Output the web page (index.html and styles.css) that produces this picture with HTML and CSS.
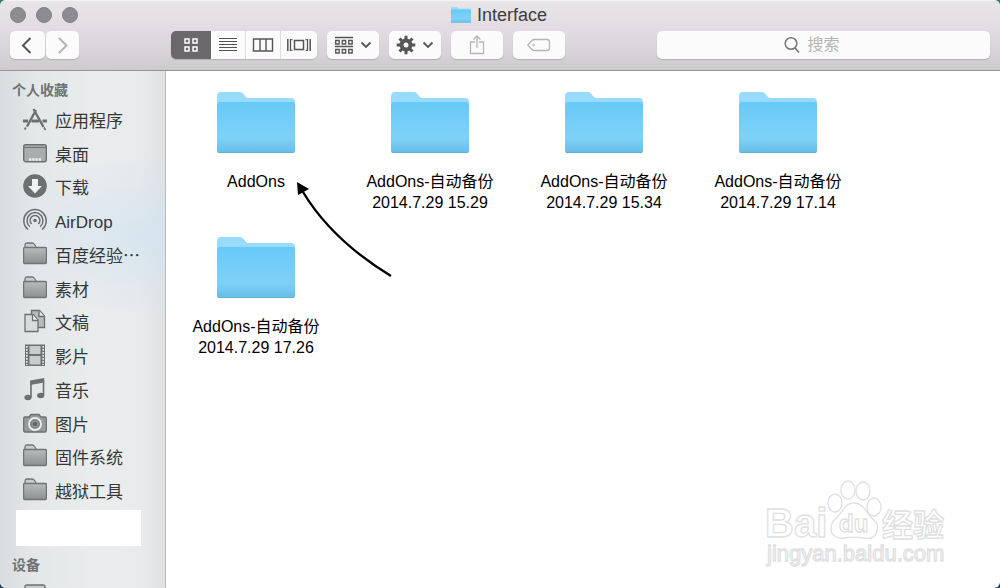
FILE: index.html
```
<!DOCTYPE html>
<html lang="zh-CN">
<head>
    <meta charset="UTF-8">
    <meta name="viewport" content="width=device-width, initial-scale=1.0">
    <title>Interface</title>
    <link rel="stylesheet" href="styles.css">
</head>
<body>
    <!-- shared shapes -->
    <svg class="defs" width="0" height="0" aria-hidden="true">
        <defs>
            <linearGradient id="blue" x1="0" y1="0" x2="0" y2="1">
                <stop offset="0" stop-color="#68c9f6"/>
                <stop offset="0.7" stop-color="#7ed2f8"/>
                <stop offset="1" stop-color="#66bde7"/>
            </linearGradient>
            <linearGradient id="gray" x1="0" y1="0" x2="0" y2="1">
                <stop offset="0" stop-color="#b9bcbd"/>
                <stop offset="1" stop-color="#8d9091"/>
            </linearGradient>
            <symbol id="folder" viewBox="0 0 78 62">
                <path d="M0 12V4q0-4 4-4h19q2 0 3.500 2l3 3.500q1 .5 2 .5H74q4 0 4 4v6H0z" fill="#97dcfe"/>
                <path d="M0 13q0-3 3-3h72q3 0 3 3v46q0 2-2 2H2q-2 0-2-2z" fill="url(#blue)"/>
                <path d="M1 60.500h76" fill="none" stroke="#62b0d6"/>
            </symbol>
            <symbol id="side-folder" viewBox="0 0 24 24">
                <path d="M2 6V3.500Q2 1 4 1h5q1.500 0 2.500 1.500L13.500 5.500" fill="#c9cccd" stroke="#707475" stroke-width="1.300"/>
                <rect x=".6" y="5.500" width="22.800" height="16" rx="1" fill="url(#gray)" stroke="#707475" stroke-width="1.300"/>
            </symbol>
        </defs>
    </svg>

    <div class="window">
        <header class="header">
            <div class="titlebar">
                <div class="lights">
                    <button class="light" aria-label="关闭"></button>
                    <button class="light" aria-label="最小化"></button>
                    <button class="light" aria-label="缩放"></button>
                </div>
                <h1 class="title"><svg width="20" height="16" viewBox="0 0 78 62"><use href="#folder"/></svg>Interface</h1>
            </div>

            <div class="toolbar">
                <div class="nav">
                    <button class="tool" aria-label="后退"><svg width="35" height="28"><path d="M20.500 7l-7.500 7.500 7.500 7.500" class="thick"/></svg></button>
                    <button class="tool off" aria-label="前进"><svg width="33" height="28"><path d="M13 7l7.500 7.500L13 22" class="thick"/></svg></button>
                </div>

                <div class="views">
                    <button class="view active" aria-label="图标">
                        <svg width="16" height="16"><path d="M2 2h4v4H2zM10 2h4v4h-4zM2 10h4v4H2zM10 10h4v4h-4z" stroke-width="1.500"/></svg>
                    </button>
                    <button class="view" aria-label="列表">
                        <svg width="20" height="16"><path d="M1 1.500h18M1 4.500h18M1 7.500h18M1 10.500h18M1 13.500h18" stroke-width="1.200"/></svg>
                    </button>
                    <button class="view" aria-label="分栏">
                        <svg width="22" height="16"><path d="M1.500 2h19v12h-19zM8 2v12M14 2v12" stroke-width="1.400"/></svg>
                    </button>
                    <button class="view" aria-label="Cover Flow">
                        <svg width="24" height="16"><path d="M7.500 3.500h9v9h-9zM.8 2v12M23.200 2v12" stroke-width="1.500"/><path d="M3.500 2v12M20.500 2v12" stroke-width="1.300"/><path d="M3.500 2.700h2M3.500 13.300h2M18.500 2.700h2M18.500 13.300h2"/></svg>
                    </button>
                </div>

                <button class="tool wide" aria-label="排列">
                    <svg width="20" height="18"><path d="M1 1.500h18M1 10.500h18" stroke-width="1.300"/><path d="M1.700 4.500h3.500v3.500H1.700zM8.200 4.500h3.500v3.500H8.200zM14.700 4.500h3.500v3.500h-3.500zM1.700 13.500h3.500v3.500H1.700zM8.200 13.500h3.500v3.500H8.200zM14.700 13.500h3.500v3.500h-3.500z" stroke-width="1.300"/></svg>
                    <svg width="12" height="8"><path d="M1.500 1.500L6 6l4.500-4.500" stroke-width="1.800"/></svg>
                </button>
                <button class="tool wide" aria-label="操作">
                    <svg width="20" height="20" viewBox="-10 -10 20 20">
                        <circle r="4.500" stroke-width="4"/>
                        <path d="M0-9.300V-5M0 9.300V5M-9.300 0H-5M9.300 0H5M-6.500-6.500L-4-4M6.500 6.500L4 4M-6.500 6.500L-4 4M6.500-6.500L4-4" stroke-width="3"/>
                    </svg>
                    <svg width="12" height="8"><path d="M1.500 1.500L6 6l4.500-4.500" stroke-width="1.800"/></svg>
                </button>
                <button class="tool wide off" aria-label="共享">
                    <svg width="18" height="22"><path d="M7 8H2.500v11.500h13V8H11M9 14V2.500M5.500 5.500L9 2l3.500 3.500" stroke-width="1.300"/></svg>
                </button>
                <button class="tool wide off" aria-label="标记">
                    <svg width="24" height="16"><path d="M7 2.500h13q2.500 0 2.500 2.500v6q0 2.500-2.500 2.500H7Q6 13.500 5 12.500L1.500 9q-1-1 0-2L5 3.500Q6 2.500 7 2.500z" stroke-width="1.300"/><circle cx="6.500" cy="8" r=".8"/></svg>
                </button>

                <label class="search">
                    <svg width="16" height="18"><circle cx="7" cy="7.500" r="5.800" stroke-width="1.500"/><path d="M11 12l4 4.500" stroke-width="1.700"/></svg>
                    <input type="text" class="search-input" placeholder="搜索" aria-label="搜索">
                </label>
            </div>
        </header>

        <div class="body">
            <nav class="sidebar">
                <h2 class="group">个人收藏</h2>
                <ul class="places">
                    <li><a href="#">
                        <svg viewBox="0 0 24 24"><g fill="none" stroke="#6b7070"><path d="M13 3L4 19.500M10.500 2L20.500 20" stroke-width="2.400"/><path d="M0 14h5M8.500 14h7.500M19.500 14H24" stroke-width="3.200"/><path d="M3 20.500l-1.500 2M21 20.500l1.500 2.500" stroke-width="1.600"/></g></svg>
                        应用程序</a></li>
                    <li><a href="#">
                        <svg viewBox="0 0 24 24"><rect x=".7" y="3.700" width="22.600" height="17" rx="2" fill="#a9adae" stroke="#6b7070" stroke-width="1.400"/><path d="M1 6.500h22" stroke="#6b7070" stroke-width="1.200"/><path d="M6 18.500h12" stroke="#eceeee" stroke-width="2.600" stroke-dasharray="2.400 .8"/></svg>
                        桌面</a></li>
                    <li><a href="#">
                        <svg viewBox="0 0 24 24"><circle cx="12" cy="12" r="11.800" fill="#6b7070"/><path d="M9 5h6v7h4l-7 7.500L5 12h4z" fill="#f0f3f3"/></svg>
                        下载</a></li>
                    <li><a href="#">
                        <svg viewBox="0 0 24 24"><g fill="none" stroke="#6b7070" stroke-width="1.500"><path d="M5 21.500a11.200 11.200 0 1 1 14 0"/><path d="M6.800 18.700a8 8 0 1 1 10.400 0"/><path d="M8.700 16a4.900 4.900 0 1 1 6.600 0"/></g><circle cx="12" cy="12.500" r="1.800" fill="#6b7070"/></svg>
                        AirDrop</a></li>
                    <li><a href="#"><svg><use href="#side-folder"/></svg>百度经验⋯</a></li>
                    <li><a href="#"><svg><use href="#side-folder"/></svg>素材</a></li>
                    <li><a href="#">
                        <svg viewBox="0 0 24 24"><g stroke="#6b7070" stroke-width="1.300"><path d="M8.500 1.500h8l5 5.500v11.500h-13z" fill="#b7babb"/><path d="M16 1.500v6h5.500" fill="#e5e7e8"/><path d="M2 5.500h8l5 5.500v11.500H2z" fill="#d9dcdd"/><path d="M9.500 5.500v6H15" fill="#eceeef"/></g></svg>
                        文稿</a></li>
                    <li><a href="#">
                        <svg viewBox="0 0 24 24"><rect x="2" y="1.500" width="20" height="21.500" fill="#6b7070"/><path d="M6.500 3h11v8h-11zM6.500 13h11v8.500h-11z" fill="#c9ccce"/><path d="M3.800 3v19M20.200 3v19" stroke="#eef0f1" stroke-width="1.600" stroke-dasharray="1.700 1.300"/></svg>
                        影片</a></li>
                    <li><a href="#">
                        <svg viewBox="0 0 24 24"><path d="M8 20V4M20.500 3V18" fill="none" stroke="#6b7070" stroke-width="1.600"/><path d="M7.200 3.500l14-2.500v4.500L7.200 8z" fill="#6b7070"/><ellipse cx="5" cy="20.500" rx="3.600" ry="2.700" fill="#6b7070"/><ellipse cx="17.700" cy="18.500" rx="3.600" ry="2.700" fill="#6b7070"/></svg>
                        音乐</a></li>
                    <li><a href="#">
                        <svg viewBox="0 0 24 24"><path d="M2 6h4l2-2.500h8L18 6h4q1.300 0 1.300 1.500v12q0 1.500-1.300 1.500H2q-1.300 0-1.300-1.500v-12Q.7 6 2 6z" fill="#979b9c" stroke="#6b7070" stroke-width="1.300"/><circle cx="12" cy="13" r="6" fill="#808485" stroke="#eceeef" stroke-width="1.800"/><circle cx="12" cy="13" r="3" fill="#65696a" stroke="#9a9e9f"/></svg>
                        图片</a></li>
                    <li><a href="#"><svg><use href="#side-folder"/></svg>固件系统</a></li>
                    <li><a href="#"><svg><use href="#side-folder"/></svg>越狱工具</a></li>
                </ul>
                <div class="blank"></div>
                <h2 class="group">设备</h2>
                <svg class="device" width="24" height="20"><rect x="2" y="1" width="20" height="16" rx="2" fill="#c9cccd" stroke="#6b7070" stroke-width="1.400"/></svg>
            </nav>

            <main class="content">
                <ul class="files">
                    <li class="file"><svg width="78" height="62"><use href="#folder"/></svg><span>AddOns</span></li>
                    <li class="file"><svg width="78" height="62"><use href="#folder"/></svg><span>AddOns-自动备份<br>2014.7.29 15.29</span></li>
                    <li class="file"><svg width="78" height="62"><use href="#folder"/></svg><span>AddOns-自动备份<br>2014.7.29 15.34</span></li>
                    <li class="file"><svg width="78" height="62"><use href="#folder"/></svg><span>AddOns-自动备份<br>2014.7.29 17.14</span></li>
                    <li class="file"><svg width="78" height="62"><use href="#folder"/></svg><span>AddOns-自动备份<br>2014.7.29 17.26</span></li>
                </ul>

                <svg class="arrow" width="100" height="100" aria-hidden="true">
                    <path d="M7 11Q36 59 95 95" fill="none" stroke="#000" stroke-width="2.400"/>
                    <path d="M1 1l12 7L2 14z"/>
                </svg>

                <svg class="watermark" width="190" height="92" aria-label="Baidu 经验">
                    <g fill="#fff" stroke="#dfdfdf" stroke-width="1.300">
                        <text x="3" y="57" font-size="40" font-weight="bold">Bai</text>
                        <ellipse cx="73" cy="23" rx="7" ry="9"/>
                        <ellipse cx="86" cy="10" rx="7" ry="9"/>
                        <ellipse cx="101" cy="11" rx="7" ry="9"/>
                        <ellipse cx="112" cy="27" rx="7" ry="9"/>
                        <path d="M92 23c8 0 11 7 16 13s9 7 7 15-9 8-14 7-12-1-18 0-14-1-14-9 4-9 9-15 6-11 14-11z"/>
                        <text x="77" y="52" font-size="24" font-weight="bold">du</text>
                        <text x="120" y="56" font-size="31" font-weight="bold">经验</text>
                        <text x="5" y="81" font-size="22">jingyan.baidu.com</text>
                    </g>
                </svg>
            </main>
        </div>
    </div>
</body>
</html>
```

FILE: styles.css
```
* {
    box-sizing: border-box;
}

body {
    margin: 0;
    background: linear-gradient(#2f7f6e, #1f3f5c);
    font-family: "Liberation Sans", "Noto Sans CJK SC", sans-serif;
}

h1, h2, ul {
    margin: 0;
    padding: 0;
    font-weight: normal;
    list-style: none;
}

button {
    border: none;
    padding: 0;
}

.defs {
    position: absolute;
}

.window {
    display: flex;
    flex-direction: column;
    height: 100vh;
    border-radius: 6px;
    overflow: hidden;
    background: #fff;
}

/* title bar and toolbar */
.header {
    background: linear-gradient(#e8e5e8, #dfdadf 50%, #cecbcf);
    border-top: 1px solid #f5f3f5;
    border-bottom: 1px solid #959396;
}

.titlebar {
    display: grid;
    grid-template-columns: 1fr auto 1fr;
    align-items: center;
    height: 30px;
    padding: 0 12px 2px 10px;
}

.lights {
    display: flex;
    gap: 10px;
}

.light {
    width: 16px;
    height: 16px;
    border: 1px solid #828186;
    border-radius: 50%;
    background: #8d8c91;
}

.title {
    display: flex;
    align-items: center;
    gap: 6px;
    color: #3f3c40;
    font-size: 18px;
    line-height: 20px;
}

.toolbar {
    display: flex;
    gap: 10px;
    padding: 0 10px 11px;
}

.nav, .views {
    display: flex;
    gap: 1px;
    margin-right: 82px;
}

.views {
    gap: 0;
    margin-right: 0;
    border-radius: 5px;
    overflow: hidden;
    box-shadow: 0 1px 1px #b1aeb2;
}

.tool, .view, .search {
    display: flex;
    align-items: center;
    justify-content: center;
    height: 28px;
    border-radius: 5px;
    background: #fbfbfb;
    color: #555;
}

.tool, .search {
    box-shadow: 0 1px 1px #b1aeb2;
}

.tool svg, .view svg, .search svg {
    display: block;
    fill: none;
    stroke: currentColor;
}

.tool .thick {
    stroke-width: 2;
}

.wide {
    width: 52px;
    gap: 6px;
}

.tool.off {
    color: #b4b4b4;
}

.view {
    width: 35px;
    border-radius: 0;
    border-right: 1px solid #dddbdd;
}

.view:last-child {
    width: 36px;
    border-right: none;
}

.view.active {
    width: 40px;
    border-right: none;
    background: #6b686b;
    color: #fff;
}

.search {
    flex: 1;
    justify-content: flex-start;
    gap: 8px;
    margin-left: 82px;
    color: #777;
}

.search svg {
    flex: none;
    margin-left: 38%;
}

.search-input {
    flex: 1;
    min-width: 0;
    padding: 0;
    border: none;
    outline: none;
    background: none;
    font-family: inherit;
    font-size: 16px;
}

.search-input::placeholder {
    color: #b4b4b4;
}

.body {
    display: flex;
    flex: 1;
    min-height: 0;
}

/* sidebar */
.sidebar {
    display: flex;
    flex-direction: column;
    flex: none;
    width: 166px;
    padding-top: 8px;
    border-right: 1px solid #b9bbbd;
    background:
        radial-gradient(ellipse 150px 80px at 150px 165px, #cfe3f1b0, #cfe3f100),
        linear-gradient(90deg, #d9dcde, #e4e7e8 20%, #eaeced 60%, #e8eaeb 85%, #dfe1e3);
    overflow: hidden;
}

.group {
    padding-left: 12px;
    color: #6e7273;
    font-size: 14px;
    font-weight: bold;
    line-height: 22px;
}

.places {
    display: flex;
    flex-direction: column;
    flex: 1;
    padding-top: 4px;
}

.places li {
    display: flex;
    flex: 1;
    align-items: center;
}

.places a {
    display: flex;
    align-items: center;
    gap: 8px;
    padding-left: 23px;
    color: #343839;
    font-size: 17px;
    line-height: 24px;
    text-decoration: none;
    white-space: nowrap;
}

.places svg {
    width: 24px;
    height: 24px;
    margin-bottom: 6px;
}

.blank {
    height: 36px;
    margin: 0 24px 8px 16px;
    background: #fff;
}

.device {
    flex: none;
    height: 4px;
    margin: 8px 0 0 23px;
}

/* folders */
.content {
    position: relative;
    flex: 1;
    padding: 21px 0 0 3px;
}

.files {
    display: grid;
    grid-template-columns: repeat(auto-fill, 174px);
    row-gap: 24px;
}

.file {
    display: flex;
    flex-direction: column;
    align-items: center;
    gap: 17px;
    font-size: 16px;
    line-height: 21px;
    text-align: center;
}

.arrow {
    position: absolute;
    left: 130px;
    top: 110px;
}

.watermark {
    position: absolute;
    right: 48px;
    bottom: 16px;
}
```
